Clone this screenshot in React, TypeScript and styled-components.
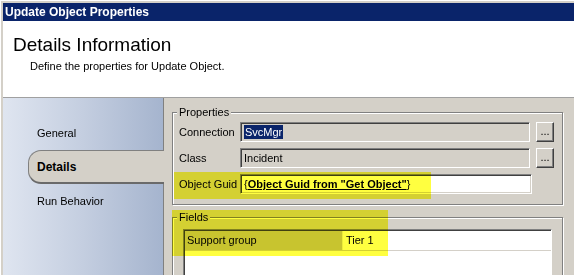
import React from "react";
import styled, { createGlobalStyle } from "styled-components";

const GlobalStyle = createGlobalStyle`
  html, body {
    margin: 0;
    padding: 0;
    background: #d4d0c8;
  }
  body {
    font-family: "Liberation Sans", Arial, sans-serif;
    font-size: 11px;
    color: #000;
  }
  * {
    box-sizing: border-box;
  }
`;

const Window = styled.div`
  width: 574px;
  height: 275px;
  overflow: hidden;
  display: flex;
  flex-direction: column;
  padding: 3px 0 0 3px;
  background: #d4d0c8;
  box-shadow: inset 1px 1px 0 #ffffff;
`;

const TitleBar = styled.div`
  flex: none;
  height: 18px;
  padding-left: 2px;
  background: #0a246a;
  color: #ffffff;
  font-weight: bold;
  font-size: 12px;
  line-height: 18px;
  white-space: nowrap;
`;

const Header = styled.div`
  flex: none;
  height: 77px;
  background: #ffffff;
  border-bottom: 1px solid #a0a0a0;
  padding: 13px 0 0 10px;
`;

const Heading = styled.div`
  font-size: 19px;
  line-height: 22px;
`;

const Description = styled.div`
  margin: 4px 0 0 17px;
  font-size: 11px;
  line-height: 13px;
`;

const Body = styled.div`
  flex: 1;
  min-height: 0;
  display: flex;
`;

const Sidebar = styled.div`
  flex: none;
  width: 161px;
  padding-top: 18px;
  display: flex;
  flex-direction: column;
  border-right: 1px solid #808080;
  background: linear-gradient(90deg, #dfe5f0 0%, #c4cee0 50%, #a5b4ce 100%);
`;

const NavItem = styled.div<{ $active?: boolean }>`
  height: 34px;
  margin-left: 25px;
  padding-left: ${(p) => (p.$active ? 8 : 9)}px;
  display: flex;
  align-items: center;
  white-space: nowrap;
  font-size: ${(p) => (p.$active ? 12 : 11)}px;
  font-weight: ${(p) => (p.$active ? "bold" : "normal")};
  ${(p) =>
    p.$active &&
    `
    position: relative;
    z-index: 1;
    margin-right: -1px;
    background: #d4d0c8;
    border: 1px solid #808080;
    border-right: none;
    border-bottom: 2px solid #6a6a6a;
    border-radius: 13px 0 0 13px;
  `}
`;

const Panel = styled.div`
  flex: 1;
  position: relative;
  display: flex;
  flex-direction: column;
  padding: 8px 11px 0 8px;
  background: #d4d0c8;
`;

const GroupBox = styled.fieldset<{ $gap?: number }>`
  margin: ${(p) => p.$gap ?? 0}px 0 0 0;
  padding: 0 7px 7px 6px;
  min-width: 0;
  border: 1px solid #808080;
  box-shadow: inset 1px 1px 0 #ffffff, 1px 1px 0 #ffffff;
`;

const Legend = styled.legend`
  margin-left: -2px;
  padding: 0 2px;
  line-height: 13px;
  font-size: 11px;
  background: #d4d0c8;
`;

const FieldRow = styled.div`
  display: flex;
  align-items: center;
  height: 26px;
`;

const Label = styled.div`
  flex: none;
  width: 61px;
  white-space: nowrap;
`;

const TextBox = styled.div<{ $editable?: boolean }>`
  flex: none;
  width: ${(p) => (p.$editable ? 292 : 290)}px;
  height: 20px;
  padding: 0 3px;
  display: flex;
  align-items: center;
  white-space: nowrap;
  overflow: hidden;
  background: ${(p) => (p.$editable ? "#ffffff" : "#d4d0c8")};
  border: 1px solid;
  border-color: #808080 #ffffff #ffffff #808080;
  box-shadow: inset 1px 1px 0 #404040, inset -1px -1px 0 #d4d0c8;
`;

const Selected = styled.span`
  background: #0a246a;
  color: #ffffff;
  padding: 0 1px;
  line-height: 14px;
`;

const Reference = styled.span`
  font-weight: bold;
  text-decoration: underline;
`;

const BrowseButton = styled.button`
  flex: none;
  width: 18px;
  height: 20px;
  margin-left: 6px;
  padding: 0 0 2px;
  font-family: inherit;
  font-size: 11px;
  line-height: 16px;
  background: #d4d0c8;
  border: 1px solid;
  border-color: #ffffff #404040 #404040 #ffffff;
  box-shadow: inset -1px -1px 0 #808080;
  color: #000;
`;

const FieldsTable = styled.div`
  margin: 5px 3px 0 4px;
  height: 60px;
  padding: 1px 0 0 1px;
  background: #ffffff;
  border: 1px solid;
  border-color: #808080 #ffffff #ffffff #808080;
  box-shadow: inset 1px 1px 0 #404040;
`;

const TableRow = styled.div`
  display: grid;
  grid-template-columns: 158px 1fr;
  height: 20px;
  border-bottom: 1px solid #d4d0c8;
`;

const Cell = styled.div<{ $name?: boolean }>`
  padding-left: ${(p) => (p.$name ? 2 : 3)}px;
  line-height: 19px;
  white-space: nowrap;
  background: ${(p) => (p.$name ? "#c8c4bc" : "#ffffff")};
  border-right: ${(p) => (p.$name ? "1px solid #ececec" : "none")};
`;

const Highlight = styled.div`
  position: absolute;
  background: #ffff40;
  mix-blend-mode: multiply;
  pointer-events: none;
`;

const GuidHighlight = styled(Highlight)`
  left: 10px;
  top: 74px;
  width: 257px;
  height: 27px;
`;

const FieldsHighlight = styled(Highlight)`
  left: 8px;
  top: 112px;
  width: 216px;
  height: 46px;
`;

const App: React.FC = () => {
  return (
    <>
      <GlobalStyle />
      <Window>
        <TitleBar>Update Object Properties</TitleBar>
        <Header>
          <Heading>Details Information</Heading>
          <Description>Define the properties for Update Object.</Description>
        </Header>
        <Body>
          <Sidebar>
            <NavItem>General</NavItem>
            <NavItem $active>Details</NavItem>
            <NavItem>Run Behavior</NavItem>
          </Sidebar>
          <Panel>
            <GroupBox>
              <Legend>Properties</Legend>
              <FieldRow>
                <Label>Connection</Label>
                <TextBox>
                  <Selected>SvcMgr</Selected>
                </TextBox>
                <BrowseButton>...</BrowseButton>
              </FieldRow>
              <FieldRow>
                <Label>Class</Label>
                <TextBox>Incident</TextBox>
                <BrowseButton>...</BrowseButton>
              </FieldRow>
              <FieldRow>
                <Label>Object Guid</Label>
                <TextBox $editable>
                  {"{"}
                  <Reference>Object Guid from "Get Object"</Reference>
                  {"}"}
                </TextBox>
              </FieldRow>
            </GroupBox>

            <GroupBox $gap={6}>
              <Legend>Fields</Legend>
              <FieldsTable>
                <TableRow>
                  <Cell $name>Support group</Cell>
                  <Cell>Tier 1</Cell>
                </TableRow>
              </FieldsTable>
            </GroupBox>

            {/* marker pen highlights drawn over the form */}
            <GuidHighlight />
            <FieldsHighlight />
          </Panel>
        </Body>
      </Window>
    </>
  );
};

export default App;
